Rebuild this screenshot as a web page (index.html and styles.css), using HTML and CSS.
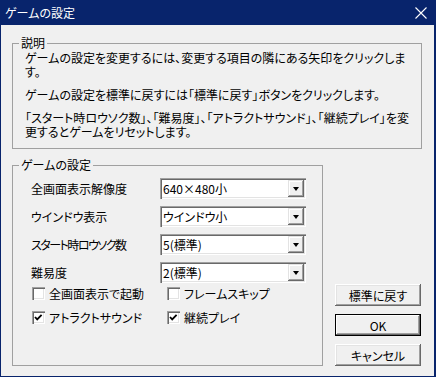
FILE: index.html
```
<!DOCTYPE html>
<html lang="ja">
<head>
    <meta charset="UTF-8">
    <title>ゲームの設定</title>
    <link rel="stylesheet" href="styles.css">
</head>
<body>
    <div class="window">
        <div class="titlebar">
            <span class="title">ゲームの設定</span>
            <svg class="close" width="12" height="12" viewBox="0 0 12 12">
                <path d="M0.5 0.5L11.5 11.5M11.5 0.5L0.5 11.5" stroke="#fff" stroke-width="1.1" fill="none"/>
            </svg>
        </div>

        <div class="client">
            <fieldset class="group group-help">
                <legend>説明</legend>
                <div class="help">
                    <p>ゲームの設定を変更するには、変更する項目の隣にある矢印をクリックしま<br>す。</p>
                    <p>ゲームの設定を標準に戻すには「標準に戻す」ボタンをクリックします。</p>
                    <p>「スタート時ロウソク数」、「難易度」、「アトラクトサウンド」、「継続プレイ」を変<br>更するとゲームをリセットします。</p>
                </div>
            </fieldset>

            <div class="lower">
                <fieldset class="group group-settings">
                    <legend>ゲームの設定</legend>
                    <div class="settings">
                        <span class="label">全画面表示解像度</span>
                        <div class="combo"><span class="value">640×480小</span><span class="drop"></span></div>

                        <span class="label">ウインドウ表示</span>
                        <div class="combo"><span class="value">ウインドウ小</span><span class="drop"></span></div>

                        <span class="label tight">スタート時ロウソク数</span>
                        <div class="combo"><span class="value">5(標準)</span><span class="drop"></span></div>

                        <span class="label">難易度</span>
                        <div class="combo"><span class="value">2(標準)</span><span class="drop"></span></div>
                    </div>
                    <div class="checks">
                        <div class="check"><span class="box"></span>全画面表示で起動</div>
                        <div class="check"><span class="box"></span>フレームスキップ</div>
                        <div class="check"><span class="box"><svg width="9" height="9" viewBox="0 0 9 9"><polyline points="1,4 3.2,6.4 7.6,1.8" stroke="#000" stroke-width="1.8" fill="none"/></svg></span>アトラクトサウンド</div>
                        <div class="check"><span class="box"><svg width="9" height="9" viewBox="0 0 9 9"><polyline points="1,4 3.2,6.4 7.6,1.8" stroke="#000" stroke-width="1.8" fill="none"/></svg></span>継続プレイ</div>
                    </div>
                </fieldset>

                <div class="buttons">
                    <button class="btn">標準に戻す</button>
                    <button class="btn default">OK</button>
                    <button class="btn">キャンセル</button>
                </div>
            </div>
        </div>
    </div>
</body>
</html>
```

FILE: styles.css
```
body {
    margin: 0;
    font-family: "Noto Sans CJK JP", "Liberation Sans", sans-serif;
    font-size: 12px;
    font-feature-settings: "palt";
    color: #000;
}

.window {
    width: 436px;
    height: 377px;
    background: #08246c;
    display: flex;
    flex-direction: column;
}

.titlebar {
    height: 25px;
    display: flex;
    align-items: center;
    justify-content: space-between;
    padding: 0 9px 0 5px;
    color: white;
}

.title {
    line-height: 14px;
}

.client {
    flex: 1;
    background: #f0f0f0;
    margin: 0 2px 1px 1px;
    padding: 11px 12px 0 11px;
}

.group {
    border: 1px solid #a0a0a0;
    margin: 0;
    padding: 0;
    min-width: 0;
    box-sizing: border-box;
}

.group legend {
    margin-left: 6px;
    padding: 0 2px;
    line-height: 14px;
}

.help {
    padding: 1px 12px 9px 12px;
    line-height: 14px;
    white-space: nowrap;
}

.help p {
    margin: 0 0 9px;
}

.help p:last-child {
    margin-bottom: 0;
}

.lower {
    display: flex;
    gap: 12px;
    margin-top: 9px;
}

.group-settings {
    flex: none;
    width: 311px;
}

.settings {
    display: grid;
    grid-template-columns: 129px 146px;
    row-gap: 7px;
    align-items: center;
    padding: 6px 0 0 18px;
}

.label {
    white-space: nowrap;
}

.label.tight {
    letter-spacing: -1.5px;
}

.combo {
    height: 21px;
    background: white;
    display: flex;
    align-items: center;
    justify-content: space-between;
    padding: 2px;
    box-sizing: border-box;
    box-shadow: inset 1px 1px #a0a0a0, inset 2px 2px #696969, inset -1px -1px #fff, inset -2px -2px #e3e3e3;
}

.combo .value {
    padding-left: 1px;
    line-height: 17px;
}

.drop {
    width: 16px;
    height: 17px;
    background: #f0f0f0;
    box-shadow: inset -1px -1px #696969, inset 1px 1px #e3e3e3, inset -2px -2px #a0a0a0, inset 2px 2px #fff;
    display: flex;
    align-items: center;
    justify-content: center;
}

.drop::after {
    content: "";
    border-left: 3.5px solid transparent;
    border-right: 3.5px solid transparent;
    border-top: 4px solid #000;
    margin-top: 1px;
}

.checks {
    display: grid;
    grid-template-columns: 135px auto;
    grid-auto-rows: 20px;
    row-gap: 4px;
    padding: 0 0 6px 19px;
}

.check {
    display: flex;
    align-items: center;
    gap: 4px;
    white-space: nowrap;
}

.box {
    width: 13px;
    height: 13px;
    box-sizing: border-box;
    background: white;
    box-shadow: inset 1px 1px #a0a0a0, inset 2px 2px #696969, inset -1px -1px #fff, inset -2px -2px #e3e3e3;
    display: flex;
    align-items: center;
    justify-content: center;
}

.buttons {
    display: flex;
    flex-direction: column;
    gap: 8px;
    padding-top: 126px;
}

.btn {
    width: 86px;
    height: 22px;
    padding: 0;
    border: none;
    background: #f0f0f0;
    font-family: inherit;
    font-size: 12px;
    font-feature-settings: "palt";
    color: #000;
    box-shadow: inset -1px -1px #696969, inset 1px 1px #fff, inset -2px -2px #a0a0a0, inset 2px 2px #e3e3e3;
}

.btn.default {
    box-shadow: inset 0 0 0 1px #000, inset -2px -2px #696969, inset 2px 2px #fff, inset -3px -3px #a0a0a0;
}
```
